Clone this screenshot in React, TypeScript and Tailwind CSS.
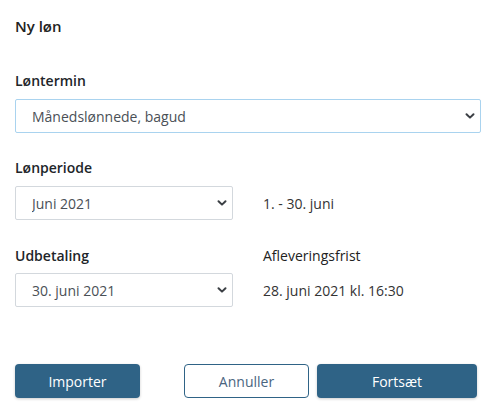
import React from "react";

const Chevron = () => (
  <svg
    className="pointer-events-none absolute right-[6px] top-1/2 -translate-y-1/2"
    width="10"
    height="8"
    viewBox="0 0 10 8"
    fill="none"
  >
    <path d="M1.5 2.2L5 5.6L8.5 2.2" stroke="#3b3f44" strokeWidth="2" strokeLinecap="round" strokeLinejoin="round" />
  </svg>
);

function Select({ value, focused }: { value: string; focused?: boolean }) {
  return (
    <div className="relative h-[34px]">
      <select
        defaultValue={value}
        className={`h-[34px] w-full appearance-none rounded-[2px] border bg-white pl-[16px] pr-8 text-[14px] text-[#4a5056] outline-none ${
          focused ? "border-[#a9d3ef]" : "border-[#d3d8dd]"
        }`}
        style={{ fontFamily: "'Open Sans', sans-serif" }}
      >
        <option>{value}</option>
      </select>
      <Chevron />
    </div>
  );
}

export default function App() {
  return (
    <div
      className="w-[496px] h-[412px] bg-white px-[15px] pt-[15px] text-[#212529]"
      style={{ fontFamily: "'Open Sans', sans-serif" }}
    >
      <h1 className="text-[15px] leading-[22px] font-semibold text-[#222]">Ny løn</h1>

      <div className="mt-[33px]">
        <div className="text-[14px] leading-[21px] font-semibold mb-[8px]">Løntermin</div>
        <Select value="Månedslønnede, bagud" focused />
      </div>

      <div className="mt-[24px] grid grid-cols-2 gap-x-[30px]">
        <div>
          <div className="text-[14px] leading-[21px] font-semibold mb-[8px]">Lønperiode</div>
          <Select value="Juni 2021" />
        </div>
        <div>
          <div className="h-[21px] mb-[8px]" />
          <div className="h-[34px] flex items-center text-[14px] text-[#333]">1. - 30. juni</div>
        </div>
      </div>

      <div className="mt-[25px] grid grid-cols-2 gap-x-[30px]">
        <div>
          <div className="text-[14px] leading-[21px] font-semibold mb-[7px]">Udbetaling</div>
          <Select value="30. juni 2021" />
        </div>
        <div>
          <div className="text-[14px] leading-[21px] mb-[7px] text-[#222]">Afleveringsfrist</div>
          <div className="h-[34px] flex items-center text-[14px] text-[#333]">28. juni 2021 kl. 16:30</div>
        </div>
      </div>

      <div className="mt-[57px] flex">
        <button className="h-[34px] w-[125px] rounded-[4px] bg-[#2f6386] text-[14px] text-white shadow-[0_1px_3px_rgba(0,0,0,0.2)]">
          Importer
        </button>
        <button className="ml-[44px] h-[34px] w-[125px] rounded-[4px] border border-[#2f6386] bg-white text-[14px] text-[#4a6580]">
          Annuller
        </button>
        <button className="ml-[8px] h-[34px] w-[160px] rounded-[4px] bg-[#2f6386] text-[14px] text-white shadow-[0_1px_3px_rgba(0,0,0,0.2)]">
          Fortsæt
        </button>
      </div>
    </div>
  );
}
